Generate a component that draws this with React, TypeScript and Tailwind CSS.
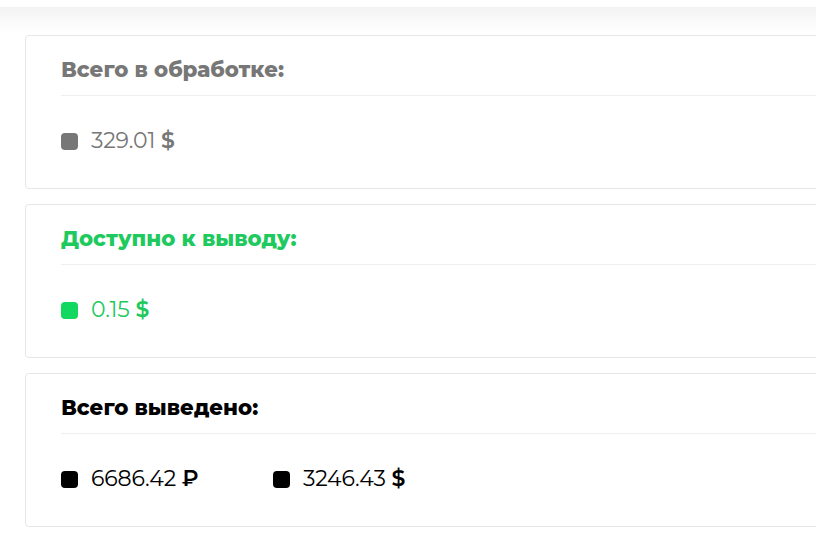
import React from 'react';

type Amount = { value: string; currency: string };

interface BalanceCardProps {
  title: string;
  titleColor: string;
  valueColor: string;
  dotColor: string;
  amounts: Amount[];
}

const BalanceCard: React.FC<BalanceCardProps> = ({ title, titleColor, valueColor, dotColor, amounts }) => {
  return (
    <div className="w-[830px] h-[154px] bg-white border border-[#e6e6e6] rounded-[4px] pl-[35px] pt-[21px]">
      {/* Header */}
      <div className={`text-[21.3px] leading-[25px] font-extrabold ${titleColor}`}>{title}</div>
      <div className="mt-[13px] h-px bg-[#efefef]" />

      {/* Amounts */}
      <div className="flex items-center mt-[33px] h-[24px]">
        {amounts.map((a, i) => (
          <div key={i} className="flex items-center w-[212px] shrink-0">
            <span className={`w-[17px] h-[17px] rounded-[4px] shrink-0 ${dotColor}`} />
            <span className={`ml-[13px] text-[22px] leading-[24px] tracking-[-0.1px] ${valueColor}`}>
              {a.value} <span className="font-semibold">{a.currency}</span>
            </span>
          </div>
        ))}
      </div>
    </div>
  );
};

export default function App() {
  return (
    <div
      className="w-[816px] h-[538px] bg-white overflow-hidden"
      style={{ fontFamily: 'Montserrat, Inter, "Noto Sans", sans-serif' }}
    >
      {/* Top shadow band */}
      <div className="h-[7px] bg-white" />
      <div className="h-[26px] bg-gradient-to-b from-[#f3f3f3] to-white" />

      <div className="flex flex-col gap-[15px] pl-[25px] pt-[2px]">
        <BalanceCard
          title="Всего в обработке:"
          titleColor="text-[#777777]"
          valueColor="text-[#777777]"
          dotColor="bg-[#777777]"
          amounts={[{ value: '329.01', currency: '$' }]}
        />
        <BalanceCard
          title="Доступно к выводу:"
          titleColor="text-[#1ec95e]"
          valueColor="text-[#1ec95e]"
          dotColor="bg-[#12d85f]"
          amounts={[{ value: '0.15', currency: '$' }]}
        />
        <BalanceCard
          title="Всего выведено:"
          titleColor="text-black"
          valueColor="text-black"
          dotColor="bg-black"
          amounts={[
            { value: '6686.42', currency: '₽' },
            { value: '3246.43', currency: '$' },
          ]}
        />
      </div>
    </div>
  );
}
